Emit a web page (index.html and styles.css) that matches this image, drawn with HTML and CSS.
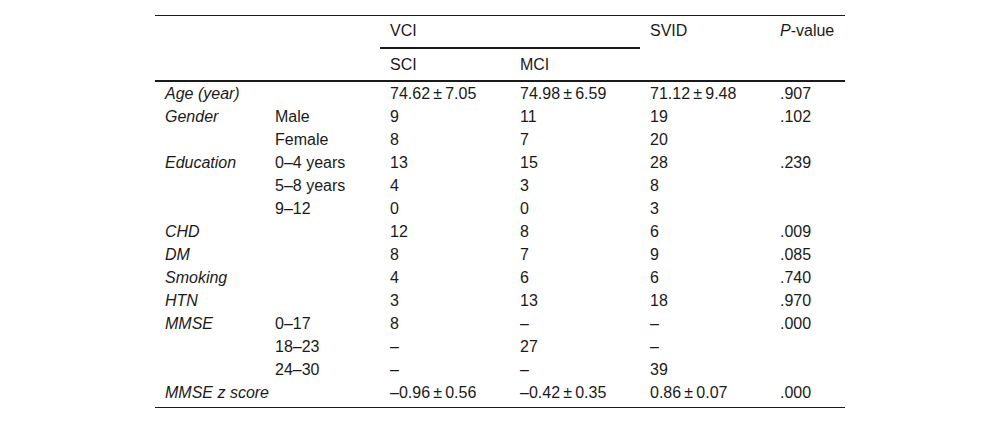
FILE: index.html
```html
<!DOCTYPE html>
<html>
<head>
<meta charset="utf-8">
<link rel="stylesheet" href="styles.css">
</head>
<body>
<table class="data">
  <colgroup>
    <col class="c1"><col class="c2"><col class="c3"><col class="c4"><col class="c5"><col class="c6">
  </colgroup>
  <thead>
    <tr class="h1">
      <th colspan="2" rowspan="2"></th>
      <th colspan="2" class="group">VCI</th>
      <th rowspan="2">SVID</th>
      <th rowspan="2"><i>P</i>-value</th>
    </tr>
    <tr class="h2">
      <th>SCI</th>
      <th>MCI</th>
    </tr>
  </thead>
  <tbody>
    <tr><td colspan="2" class="var">Age (year)</td><td>74.62&#8201;±&#8201;7.05</td><td>74.98&#8201;±&#8201;6.59</td><td>71.12&#8201;±&#8201;9.48</td><td>.907</td></tr>
    <tr><td class="var">Gender</td><td>Male</td><td>9</td><td>11</td><td>19</td><td>.102</td></tr>
    <tr><td></td><td>Female</td><td>8</td><td>7</td><td>20</td><td></td></tr>
    <tr><td class="var">Education</td><td>0–4 years</td><td>13</td><td>15</td><td>28</td><td>.239</td></tr>
    <tr><td></td><td>5–8 years</td><td>4</td><td>3</td><td>8</td><td></td></tr>
    <tr><td></td><td>9–12</td><td>0</td><td>0</td><td>3</td><td></td></tr>
    <tr><td colspan="2" class="var">CHD</td><td>12</td><td>8</td><td>6</td><td>.009</td></tr>
    <tr><td colspan="2" class="var">DM</td><td>8</td><td>7</td><td>9</td><td>.085</td></tr>
    <tr><td colspan="2" class="var">Smoking</td><td>4</td><td>6</td><td>6</td><td>.740</td></tr>
    <tr><td colspan="2" class="var">HTN</td><td>3</td><td>13</td><td>18</td><td>.970</td></tr>
    <tr><td class="var">MMSE</td><td>0–17</td><td>8</td><td>–</td><td>–</td><td>.000</td></tr>
    <tr><td></td><td>18–23</td><td>–</td><td>27</td><td>–</td><td></td></tr>
    <tr><td></td><td>24–30</td><td>–</td><td>–</td><td>39</td><td></td></tr>
    <tr class="last"><td colspan="2" class="var">MMSE z score</td><td>–0.96&#8201;±&#8201;0.56</td><td>–0.42&#8201;±&#8201;0.35</td><td>0.86&#8201;±&#8201;0.07</td><td>.000</td></tr>
  </tbody>
</table>
</body>
</html>
```

FILE: styles.css
```css
html, body {
  margin: 0;
  padding: 0;
  background: #ffffff;
}

body {
  font-family: "Liberation Sans", Arial, sans-serif;
  font-size: 16px;
  color: #1a1a1a;
}

.data {
  width: 690px;
  margin: 15px auto 0;
  border-collapse: collapse;
  table-layout: fixed;
  border-top: 1px solid #1a1a1a;
  border-bottom: 1px solid #1a1a1a;
}

.c1 { width: 110px; }
.c2 { width: 115px; }
.c3 { width: 130px; }
.c4 { width: 130px; }
.c5 { width: 130px; }
.c6 { width: 75px; }

.data th {
  font-weight: normal;
  text-align: left;
  vertical-align: top;
  padding: 6px 10px 7px;
  line-height: 18px;
  white-space: nowrap;
}

.data th.group {
  border-bottom: 2px solid #1a1a1a;
}

.data thead tr.h2 th {
  padding-top: 7px;
  padding-bottom: 6px;
}

.data thead {
  border-bottom: 2px solid #1a1a1a;
}

.data td {
  padding: 0 10px;
  height: 23px;
  line-height: 23px;
  text-align: left;
  vertical-align: middle;
  white-space: nowrap;
}

.data tr.last td {
  padding-bottom: 3px;
}

.var {
  font-style: italic;
}
```
